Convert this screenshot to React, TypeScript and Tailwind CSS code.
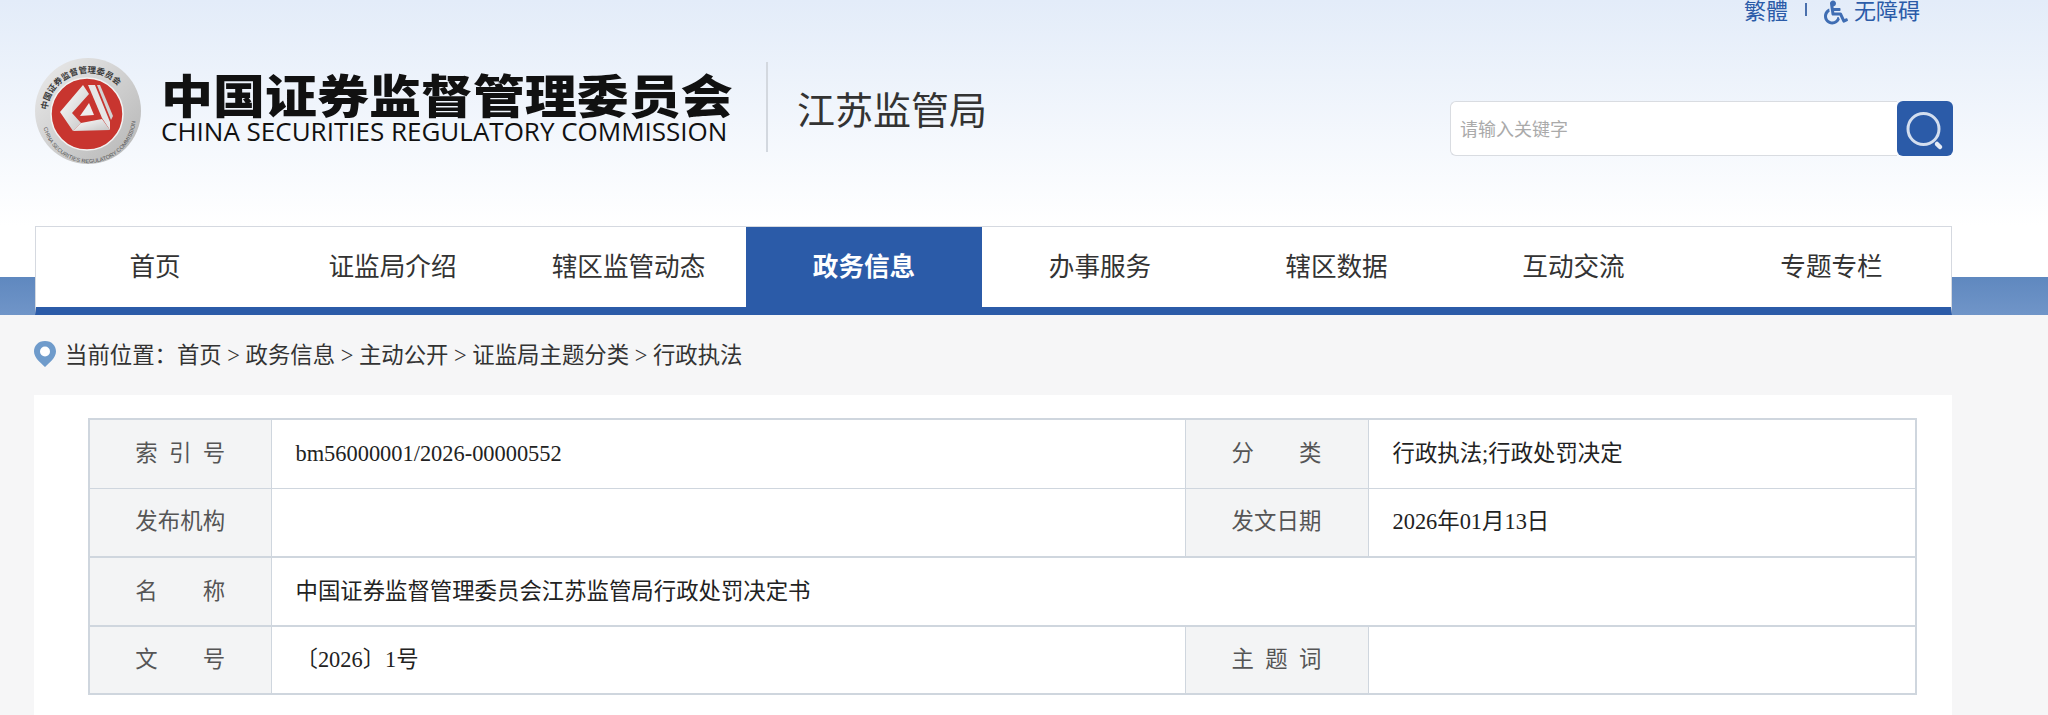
import { FaWheelchair } from "react-icons/fa";

const SERIF = "font-['Liberation_Serif','Noto_Sans_CJK_SC',serif]";

const NAV_ITEMS = [
  { label: "首页", width: "w-[238px]" },
  { label: "证监局介绍", width: "w-[237px]" },
  { label: "辖区监管动态", width: "w-[235px]" },
  { label: "政务信息", width: "w-[236px]", active: true },
  { label: "办事服务", width: "w-[236px]" },
  { label: "辖区数据", width: "w-[237px]" },
  { label: "互动交流", width: "w-[237px]" },
  { label: "专题专栏", width: "flex-1 pl-[20px]" },
];

const Seal = () => (
  <svg width="110" height="110" viewBox="0 0 110 110" className="shrink-0">
    <defs>
      <linearGradient id="ring" x1="0" y1="0" x2="1" y2="1">
        <stop offset="0" stopColor="#ececec" />
        <stop offset="1" stopColor="#b4b4b4" />
      </linearGradient>
      <linearGradient id="silver" x1="0" y1="0" x2="1" y2="1">
        <stop offset="0" stopColor="#ffffff" />
        <stop offset="1" stopColor="#c4c4c4" />
      </linearGradient>
      <path id="arcTop" d="M 13 58 A 41 41 0 0 1 95 58" />
      <path id="arcBottom" d="M 8 60 A 47 47 0 0 0 102 60" />
    </defs>
    <circle cx="54" cy="55" r="53" fill="url(#ring)" />
    <circle cx="53" cy="58" r="36" fill="#c8352f" stroke="#f2f2f2" strokeWidth="1.5" />
    <text fontSize="8.5" fontWeight="700" fill="#3b3b3b" fontFamily="Noto Sans CJK SC, sans-serif">
      <textPath href="#arcTop" startOffset="4">中国证券监督管理委员会</textPath>
    </text>
    <text fontSize="5.6" fill="#555" fontFamily="Liberation Sans, sans-serif">
      <textPath href="#arcBottom" startOffset="12">CHINA SECURITIES REGULATORY COMMISSION</textPath>
    </text>
    {/* folded triangle */}
    <path d="M26 56 L49 29 L55 38 L38 57 L47 67 L39 75 Z" fill="url(#silver)" />
    <path d="M54 29 L61 29 L76 66 L76 74 L68 62 Z" fill="#e6e6e6" />
    <path d="M63 29 L66 29 L79 60 L77 64 Z" fill="#d2d2d2" />
    <path d="M39 75 L47 67 L68 63 L76 74 Z" fill="url(#silver)" />
    <path d="M46 60 L55 47 L60 59 Z" fill="#eeeeee" />
  </svg>
);

const SearchBox = () => (
  <div className="flex w-[503px] h-[55px] mt-[77px]">
    <div className="flex-1 flex items-center pl-[9px] bg-white rounded-l-[6px] border border-[#d9dce1] border-r-0">
      <span className="text-[18px] text-[#aaaaaa] font-['Noto_Sans_CJK_SC',sans-serif]">请输入关键字</span>
    </div>
    <div className="w-[56px] flex items-center justify-center bg-[#2b5ba8] rounded-[6px]">
      <svg width="44" height="44" viewBox="0 0 44 44" fill="none">
        <circle cx="20.5" cy="22" r="15.5" stroke="#d3deef" strokeWidth="3" />
        <path d="M34 37 L37 40" stroke="#e6ecf6" strokeWidth="4.5" strokeLinecap="round" />
      </svg>
    </div>
  </div>
);

const TopLinks = () => (
  <div className="flex justify-end items-center h-[24px] pr-[128px] text-[22px] leading-[22px] text-[#2b5ba8]">
    <span className="-mt-[1px]">繁體</span>
    <span className="mx-[17px] w-[2px] h-[13px] -mt-[6px] bg-[#4a70ad]" />
    <FaWheelchair className="w-[24px] h-[25px] text-[#3f6db3] mr-[6px]" />
    <span className="-mt-[1px]">无障碍</span>
  </div>
);

const Header = () => (
  <div className={`h-[226px] bg-linear-to-b from-[#e3ecf9] to-white ${SERIF}`}>
    <TopLinks />
    <div className="flex items-start justify-between pl-[34px] pr-[95px]">
      <div className="flex items-start">
        <div className="mt-[32px]">
          <Seal />
        </div>
        <div className="ml-[17px] mt-[46px] w-[571px] text-[#111111] font-['Noto_Sans_CJK_SC',sans-serif]">
          <div className="text-[46px] leading-[46px] font-black origin-left scale-x-[1.13] whitespace-nowrap">
            中国证券监督管理委员会
          </div>
          <div className="text-[26px] leading-[26px] mt-[2px] font-medium whitespace-nowrap font-['Open_Sans',sans-serif]">
            CHINA SECURITIES REGULATORY COMMISSION
          </div>
        </div>
        <div className="w-[2px] h-[90px] mt-[38px] ml-[34px] bg-[#d3d8df]" />
        <div className="ml-[29px] mt-[64px] text-[38px] leading-[46px] text-[#333333]">江苏监管局</div>
      </div>
      <SearchBox />
    </div>
  </div>
);

const Nav = () => (
  <div className="pl-[35px] pr-[96px] bg-[linear-gradient(to_bottom,#ffffff_0,#ffffff_51px,#5f88bf_51px,#7095c8_100%)]">
    <div className={`flex h-[89px] bg-white border-t border-x border-[#d5d9e0] border-b-[8px] border-b-[#2b5ba8] ${SERIF}`}>
      {NAV_ITEMS.map((item) => (
        <div
          key={item.label}
          className={`${item.width} flex items-center justify-center pt-[2px] text-[25.6px] ${
            item.active ? "bg-[#2b5ba8] text-white font-bold" : "text-[#333333]"
          }`}
        >
          {item.label}
        </div>
      ))}
    </div>
  </div>
);

const Breadcrumb = () => (
  <div className={`flex items-center h-[80px] pl-[33px] pt-[2px] text-[22.4px] text-[#333333] ${SERIF}`}>
    <svg width="24" height="26" viewBox="0 0 24 26" className="mr-[8px] -mt-[4px]">
      <path d="M12 0 C5 0 1 5 1 10.5 C1 17 8 22 12 26 C16 22 23 17 23 10.5 C23 5 19 0 12 0 Z" fill="#6f9bcb" />
      <circle cx="12" cy="10.5" r="5" fill="#ffffff" />
    </svg>
    <span className="whitespace-pre">当前位置：首页 &gt; 政务信息 &gt; 主动公开 &gt; 证监局主题分类 &gt; 行政执法</span>
  </div>
);

const Label = ({ chars }: { chars: string[] }) => (
  <td className="bg-[#f3f4f5] border-[#cfd6de] border text-[22.4px] text-[#555555]">
    <div className="flex justify-between w-[90px] mx-auto">
      {chars.map((c) => (
        <span key={c}>{c}</span>
      ))}
    </div>
  </td>
);

const Value = ({ children, colSpan }: { children?: React.ReactNode; colSpan?: number }) => (
  <td colSpan={colSpan} className="px-[24px] border-[#cfd6de] border text-[22.4px] text-[#222222]">
    {children}
  </td>
);

const InfoTable = () => (
  <table className={`w-[1829px] table-fixed border-collapse border-2 border-[#cfd6de] ${SERIF}`}>
    <colgroup>
      <col className="w-[182px]" />
      <col className="w-[914px]" />
      <col className="w-[183px]" />
      <col />
    </colgroup>
    <tbody>
      <tr className="h-[69px]">
        <Label chars={["索", "引", "号"]} />
        <Value>bm56000001/2026-00000552</Value>
        <Label chars={["分", "类"]} />
        <Value>行政执法;行政处罚决定</Value>
      </tr>
      <tr className="h-[69px] border-b-2 border-[#cfd6de]">
        <Label chars={["发", "布", "机", "构"]} />
        <Value />
        <Label chars={["发", "文", "日", "期"]} />
        <Value>2026年01月13日</Value>
      </tr>
      <tr className="h-[69px] border-b-2 border-[#cfd6de]">
        <Label chars={["名", "称"]} />
        <Value colSpan={3}>中国证券监督管理委员会江苏监管局行政处罚决定书</Value>
      </tr>
      <tr className="h-[68px]">
        <Label chars={["文", "号"]} />
        <Value>〔2026〕1号</Value>
        <Label chars={["主", "题", "词"]} />
        <Value />
      </tr>
    </tbody>
  </table>
);

export default function App() {
  return (
    <div className="h-[715px] overflow-hidden bg-[#f6f6f7]">
      <Header />
      <Nav />
      <Breadcrumb />
      <div className="mx-[34px] w-[1918px] h-[400px] bg-white pt-[23px] pl-[54px]">
        <InfoTable />
      </div>
    </div>
  );
}
